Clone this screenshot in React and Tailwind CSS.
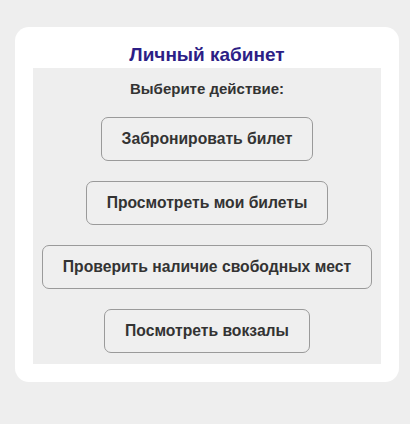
export default function App() {
  const btn =
    "rounded-[7px] border border-[#9a9a9a] bg-[#efefef] px-5 py-3 text-[15.7px] font-bold leading-[18px] text-[#333333] my-[10px]";
  return (
    <div
      className="min-h-[424px] w-full bg-[#eeeeee] pt-[27px] px-[15px]"
      style={{ fontFamily: '"Liberation Sans", Arial, sans-serif' }}
    >
      <div className="w-[384px] rounded-[14px] bg-white px-[18px] pt-[16px] pb-[18px]">
        <h1 className="text-center text-[19px] font-bold leading-[23px] text-[#2c1e86] mb-[2px]">
          Личный кабинет
        </h1>
        <div className="flex flex-col items-center bg-[#eeeeee] pt-[12px] pb-[1px]">
          <p className="text-[15px] font-bold leading-[18px] text-[#333333] mb-[9px]">
            Выберите действие:
          </p>
          <button className={btn}>Забронировать билет</button>
          <button className={btn}>Просмотреть мои билеты</button>
          <button className={btn}>Проверить наличие свободных мест</button>
          <button className={btn}>Посмотреть вокзалы</button>
        </div>
      </div>
    </div>
  );
}
